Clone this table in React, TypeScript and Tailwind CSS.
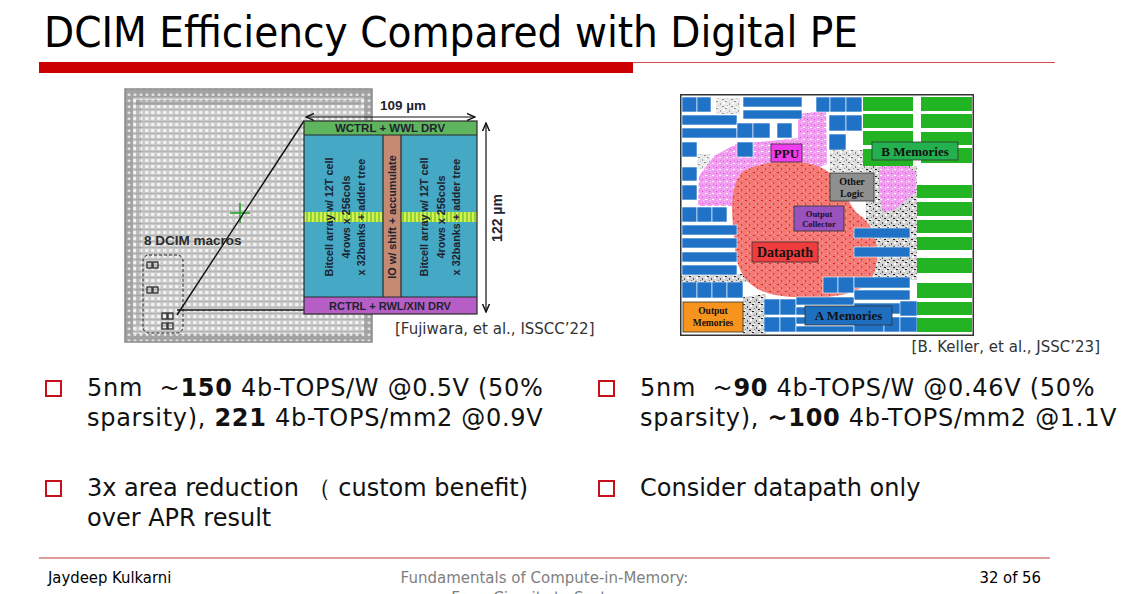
import React from "react";

const bodyFont = { fontFamily: "'DejaVu Sans', Verdana, sans-serif" };
const condFont = {
  fontFamily: "'DejaVu Sans Condensed', 'DejaVu Sans', sans-serif",
  fontStretch: "condensed" as const,
};

function ChipFigure() {
  const squares = (x: number, y: number) => (
    <g fill="none" stroke="#222" strokeWidth="1.2">
      <rect x={x} y={y} width="5" height="6" />
      <rect x={x + 6} y={y} width="5" height="6" />
    </g>
  );
  const rot = (x: number, y: number) => `rotate(-90 ${x} ${y})`;
  return (
    <svg width="390" height="258" viewBox="0 0 390 258">
      <defs>
        <pattern id="chipdots" width="6" height="6" patternUnits="userSpaceOnUse">
          <rect width="6" height="6" fill="#c9c9c9" />
          <rect x="1" y="1" width="3.5" height="3" rx="1" fill="#f3f3f3" />
          <rect x="0" y="5" width="6" height="1" fill="#b4b4b4" />
        </pattern>
        <pattern id="chipdots2" width="6" height="6" patternUnits="userSpaceOnUse">
          <rect width="6" height="6" fill="#a2a2a2" />
          <rect x="1.5" y="1.5" width="3" height="2.5" rx="1" fill="#e2e2e2" />
        </pattern>
        <pattern id="stripe" width="4" height="10" patternUnits="userSpaceOnUse">
          <rect width="4" height="10" fill="#8fd13f" />
          <rect x="0" y="0" width="2" height="10" fill="#d6f04a" />
        </pattern>
        <marker id="arr" markerWidth="8" markerHeight="8" refX="7" refY="4" orient="auto-start-reverse">
          <path d="M0,1 L7,4 L0,7" fill="none" stroke="#111" strokeWidth="1.2" />
        </marker>
      </defs>
      <rect x="5" y="3" width="247" height="253" fill="url(#chipdots2)" />
      <rect x="13" y="11" width="231" height="237" fill="url(#chipdots)" />
      <rect x="5" y="3" width="247" height="253" fill="none" stroke="#8a8a8a" strokeWidth="1.5" />
      <rect x="16" y="14" width="225" height="5" fill="#7a7a7a" opacity="0.35" />
      <rect x="16" y="14" width="5" height="225" fill="#7a7a7a" opacity="0.25" />
      <g stroke="#2aa52a" strokeWidth="1.6">
        <line x1="110" y1="127" x2="130" y2="127" />
        <line x1="120" y1="117" x2="120" y2="137" />
      </g>
      <text x="24" y="159" fontFamily="'Liberation Sans', Arial, sans-serif" fontWeight="700" fontSize="13.5" fill="#2b2b2b">
        8 DCIM macros
      </text>
      <rect x="23" y="169" width="40" height="78" rx="6" fill="none" stroke="#222" strokeWidth="1" strokeDasharray="3 2" />
      {squares(27, 176)}
      {squares(27, 201)}
      {squares(42, 227)}
      {squares(42, 237)}
      <line x1="57" y1="229" x2="184" y2="35" stroke="#111" strokeWidth="1.4" />
      <line x1="57" y1="224" x2="184" y2="224" stroke="#111" strokeWidth="1.4" />
      <rect x="184" y="35" width="173" height="14" fill="#5fb55d" />
      <rect x="184" y="49" width="79" height="162" fill="#45a8c4" />
      <rect x="263" y="49" width="18" height="162" fill="#c48a72" />
      <rect x="281" y="49" width="76" height="162" fill="#45a8c4" />
      <rect x="184" y="126" width="79" height="10" fill="url(#stripe)" />
      <rect x="281" y="126" width="76" height="10" fill="url(#stripe)" />
      <rect x="184" y="211" width="173" height="17" fill="#b65ec6" />
      <g fill="none" stroke="#2a2a2a" strokeWidth="1.2">
        <rect x="184" y="35" width="173" height="193" />
        <line x1="184" y1="49" x2="357" y2="49" />
        <line x1="184" y1="211" x2="357" y2="211" />
        <line x1="263" y1="49" x2="263" y2="211" />
        <line x1="281" y1="49" x2="281" y2="211" />
      </g>
      <g fontFamily="'Liberation Sans', Arial, sans-serif" fontWeight="700" fill="#1d2330" textAnchor="middle">
        <text x="270" y="46" fontSize="11.5">WCTRL + WWL DRV</text>
        <text x="270" y="224" fontSize="11">RCTRL + RWL/XIN DRV</text>
        <g fontSize="10.8">
          <text x="213" y="131" transform={rot(213, 131)}>Bitcell array w/ 12T cell</text>
          <text x="230" y="131" transform={rot(230, 131)}>4rows x 256cols</text>
          <text x="245" y="131" transform={rot(245, 131)}>x 32banks + adder tree</text>
          <text x="276" y="131" transform={rot(276, 131)}>IO w/ shift + accumulate</text>
          <text x="308" y="131" transform={rot(308, 131)}>Bitcell array w/ 12T cell</text>
          <text x="325" y="131" transform={rot(325, 131)}>4rows x 256cols</text>
          <text x="340" y="131" transform={rot(340, 131)}>x 32banks + adder tree</text>
        </g>
        <text x="283" y="24" fontSize="13.5">109 µm</text>
        <text x="382" y="132" fontSize="14" transform={rot(382, 132)}>122 µm</text>
      </g>
      <line x1="186" y1="31" x2="355" y2="31" stroke="#111" strokeWidth="1.2" markerStart="url(#arr)" markerEnd="url(#arr)" />
      <line x1="366" y1="37" x2="366" y2="226" stroke="#111" strokeWidth="1.2" markerStart="url(#arr)" markerEnd="url(#arr)" />
    </svg>
  );
}

function FloorPlan() {
  const blue: [number, number, number, number][] = [
    [2, 3, 15, 15], [17, 3, 14, 15], [2, 21, 55, 10], [2, 34, 55, 10],
    [57, 29, 16, 15], [73, 29, 17, 15], [97, 29, 15, 15], [2, 48, 15, 15], [57, 48, 16, 15],
    [63, 3, 59, 10], [63, 16, 59, 9],
    [136, 3, 14, 15], [150, 3, 16, 15], [166, 3, 16, 15],
    [149, 21, 17, 16], [166, 21, 16, 16], [149, 40, 17, 16],
    [2, 73, 15, 14], [2, 91, 15, 15],
    [2, 113, 15, 15], [17, 113, 15, 15], [32, 113, 15, 15],
    [2, 131, 55, 10], [2, 144, 55, 10], [2, 158, 55, 10], [2, 171, 55, 10],
    [2, 188, 15, 16], [17, 188, 15, 16], [32, 188, 15, 16], [47, 188, 16, 16],
    [174, 134, 56, 10], [174, 153, 56, 10],
    [143, 183, 15, 16], [158, 183, 16, 16], [174, 183, 56, 11], [174, 196, 56, 10],
    [84, 205, 16, 16], [100, 205, 16, 16], [116, 203, 58, 8], [116, 213, 58, 8],
    [174, 209, 56, 11], [84, 223, 16, 15], [100, 223, 16, 15], [116, 223, 58, 7], [116, 232, 58, 6],
    [174, 223, 30, 15], [204, 223, 16, 15], [220, 223, 17, 15], [220, 207, 17, 15],
  ];
  const green: [number, number, number, number][] = [
    [183, 3, 50, 14], [183, 20, 50, 14], [183, 37, 50, 14], [183, 55, 50, 17],
    [241, 3, 51, 14], [241, 20, 51, 14], [241, 38, 51, 13], [241, 54, 51, 15],
    [237, 91, 55, 13], [237, 108, 55, 14], [237, 126, 55, 13], [237, 143, 55, 13],
    [237, 164, 55, 15], [237, 189, 55, 15], [237, 208, 55, 13], [237, 224, 55, 14],
  ];
  return (
    <svg width="294" height="242" viewBox="0 0 294 242">
      <defs>
        <pattern id="noise" width="9" height="7" patternUnits="userSpaceOnUse">
          <rect width="9" height="7" fill="#d4d4d4" />
          <rect x="0" y="0" width="2" height="1" fill="#2a2a2a" />
          <rect x="4" y="2" width="1" height="2" fill="#555" />
          <rect x="6" y="5" width="2" height="1" fill="#222" />
          <rect x="2" y="4" width="1" height="1" fill="#777" />
          <rect x="7" y="1" width="2" height="2" fill="#fff" />
          <rect x="1" y="6" width="2" height="1" fill="#fff" />
        </pattern>
        <pattern id="pinkp" width="7" height="6" patternUnits="userSpaceOnUse">
          <rect width="7" height="6" fill="#f19ef1" />
          <rect x="1" y="1" width="1" height="1" fill="#d946d9" />
          <rect x="4" y="3" width="2" height="1" fill="#fff" />
          <rect x="5" y="0" width="1" height="1" fill="#e070e0" />
          <rect x="2" y="4" width="1" height="1" fill="#fbd6fb" />
        </pattern>
        <pattern id="redp" width="8" height="7" patternUnits="userSpaceOnUse">
          <rect width="8" height="7" fill="#f47a76" />
          <rect x="1" y="1" width="2" height="1" fill="#e82020" />
          <rect x="5" y="4" width="1" height="2" fill="#ee3030" />
          <rect x="3" y="5" width="1" height="1" fill="#fbb0ae" />
          <rect x="6" y="1" width="1" height="1" fill="#f9a8a6" />
        </pattern>
      </defs>
      <rect x="0" y="0" width="294" height="242" fill="#fff" />
      <polygon points="186,70 237,72 237,186 196,186 186,160" fill="url(#noise)" />
      <polygon points="150,56 200,56 200,78 150,78" fill="url(#noise)" opacity="0.7" />
      <polygon points="0,180 90,180 90,188 0,188" fill="url(#noise)" />
      <polygon points="63,203 86,200 86,240 63,240" fill="url(#noise)" />
      <polygon points="36,4 60,4 60,20 36,20" fill="url(#noise)" opacity="0.5" />
      <polygon points="17,60 30,60 30,75 17,75" fill="url(#noise)" opacity="0.5" />
      <polygon points="18,112 19,82 34,62 56,50 90,47 118,44 118,20 146,17 147,70 132,76 80,82 58,112" fill="url(#pinkp)" />
      <polygon points="199,73 226,71 236,78 236,98 214,116 203,118 199,98" fill="url(#pinkp)" />
      <path d="M62,78 C82,66 122,64 142,74 C162,84 166,108 178,120 C198,132 202,162 192,184 C182,204 134,206 102,202 C72,199 56,182 55,152 C52,122 48,96 62,78 Z" fill="url(#redp)" />
      {blue.map(([x, y, w, h], i) => (
        <rect key={"b" + i} x={x} y={y} width={w} height={h} fill="#1f72c6" stroke="#fff" strokeWidth="0.6" />
      ))}
      {green.map(([x, y, w, h], i) => (
        <rect key={"g" + i} x={x} y={y} width={w} height={h} fill="#22b422" />
      ))}
      <g fontFamily="'Liberation Serif', 'Times New Roman', serif" fontWeight="700" textAnchor="middle" fill="#111">
        <rect x="91" y="50" width="31" height="18" fill="#ee3cee" stroke="#333" strokeWidth="0.8" />
        <text x="106.5" y="64" fontSize="13">PPU</text>
        <rect x="192" y="48" width="86" height="18" fill="#23b04f" stroke="#333" strokeWidth="0.8" />
        <text x="235" y="62" fontSize="13">B Memories</text>
        <rect x="150" y="79" width="44" height="28" fill="#8f8f8f" stroke="#333" strokeWidth="0.8" />
        <text x="172" y="91" fontSize="10">Other</text>
        <text x="172" y="103" fontSize="10">Logic</text>
        <rect x="114" y="112" width="50" height="25" fill="#9a52be" stroke="#333" strokeWidth="0.8" />
        <text x="139" y="123" fontSize="8.5" fill="#1a1030">Output</text>
        <text x="139" y="133" fontSize="8.5" fill="#1a1030">Collector</text>
        <rect x="72" y="148" width="66" height="20" fill="#f03c3c" stroke="#333" strokeWidth="0.8" />
        <text x="105" y="163" fontSize="14">Datapath</text>
        <rect x="3" y="208" width="60" height="30" fill="#f7941d" stroke="#333" strokeWidth="0.8" />
        <text x="33" y="220" fontSize="9.5">Output</text>
        <text x="33" y="232" fontSize="9.5">Memories</text>
        <rect x="125" y="212" width="87" height="19" fill="#1f6fc0" stroke="#333" strokeWidth="0.8" />
        <text x="168.5" y="226" fontSize="13">A Memories</text>
      </g>
      <rect x="0.75" y="0.75" width="292.5" height="240.5" fill="none" stroke="#333" strokeWidth="1.5" />
    </svg>
  );
}

function Bullet({ lines, wide }: { lines: React.ReactNode[]; wide?: boolean }) {
  return (
    <div className="flex items-start">
      <div className="mt-[7px] w-[17px] h-[17px] shrink-0 border-[2.5px] border-[#c8101a]" />
      <div
        className={
          wide
            ? "ml-[25px] text-[24px] leading-[30px] text-[#111] whitespace-pre tracking-[0.7px]"
            : "ml-[25px] text-[24px] leading-[30px] text-[#111] whitespace-pre"
        }
      >
        {lines.map((l, i) => (
          <div key={i}>{l}</div>
        ))}
      </div>
    </div>
  );
}

export default function App() {
  return (
    <div className="w-[1128px] h-[594px] overflow-hidden bg-white flex flex-col" style={bodyFont}>
      <div className="shrink-0 pl-[44px] pt-[8px] h-[62px] text-[43.5px] leading-[48px] text-black" style={condFont}>
        DCIM Efficiency Compared with Digital PE
      </div>
      <div className="shrink-0 flex items-start ml-[39px] w-[1016px]">
        <div className="w-[594px] h-[11px] bg-[#cc0000]" />
        <div className="flex-1 h-px bg-[#d24a4a]" />
      </div>
      <div className="shrink-0 flex mt-[13px] h-[287px]">
        <div className="relative ml-[120px] w-[390px] h-[258px]">
          <ChipFigure />
          <div className="absolute left-[275px] top-[234px] text-[15px] leading-[18px] text-[#333] whitespace-nowrap">
            [Fujiwara, et al., ISSCC’22]
          </div>
        </div>
        <div className="ml-[170px] w-[420px] mt-[8px] flex flex-col">
          <FloorPlan />
          <div className="self-end mt-[2px] text-[15px] leading-[18px] text-[#333] whitespace-nowrap">
            [B. Keller, et al., JSSC’23]
          </div>
        </div>
      </div>
      <div className="shrink-0 flex h-[184px]">
        <div className="ml-[45px] w-[553px] flex flex-col gap-[40px]">
          <Bullet
            wide
            lines={[
              <>{"5nm  ~"}<b>150</b>{" 4b-TOPS/W @0.5V (50%"}</>,
              <>{"sparsity), "}<b>221</b>{" 4b-TOPS/mm2 @0.9V"}</>,
            ]}
          />
          <Bullet lines={["3x area reduction （ custom benefit)", "over APR result"]} />
        </div>
        <div className="flex flex-col gap-[40px]">
          <Bullet
            wide
            lines={[
              <>{"5nm  ~"}<b>90</b>{" 4b-TOPS/W @0.46V (50%"}</>,
              <>{"sparsity), "}<b>~100</b>{" 4b-TOPS/mm2 @1.1V"}</>,
            ]}
          />
          <Bullet lines={["Consider datapath only"]} />
        </div>
      </div>
      <div className="shrink-0 ml-[39px] w-[1011px] h-[2px] bg-[#dc9a9a]" />
      <div className="shrink-0 ml-[48px] w-[993px] flex mt-[9px] leading-[20px]">
        <div className="w-[300px] text-[16.5px] text-black" style={condFont}>Jaydeep Kulkarni</div>
        <div className="flex-1 text-center text-[15px] text-[#7f7f7f]">
          <div>Fundamentals of Compute-in-Memory:</div>
          <div>From Circuits to Systems</div>
        </div>
        <div className="w-[300px] text-right text-[16.5px] text-black" style={condFont}>32 of 56</div>
      </div>
    </div>
  );
}
